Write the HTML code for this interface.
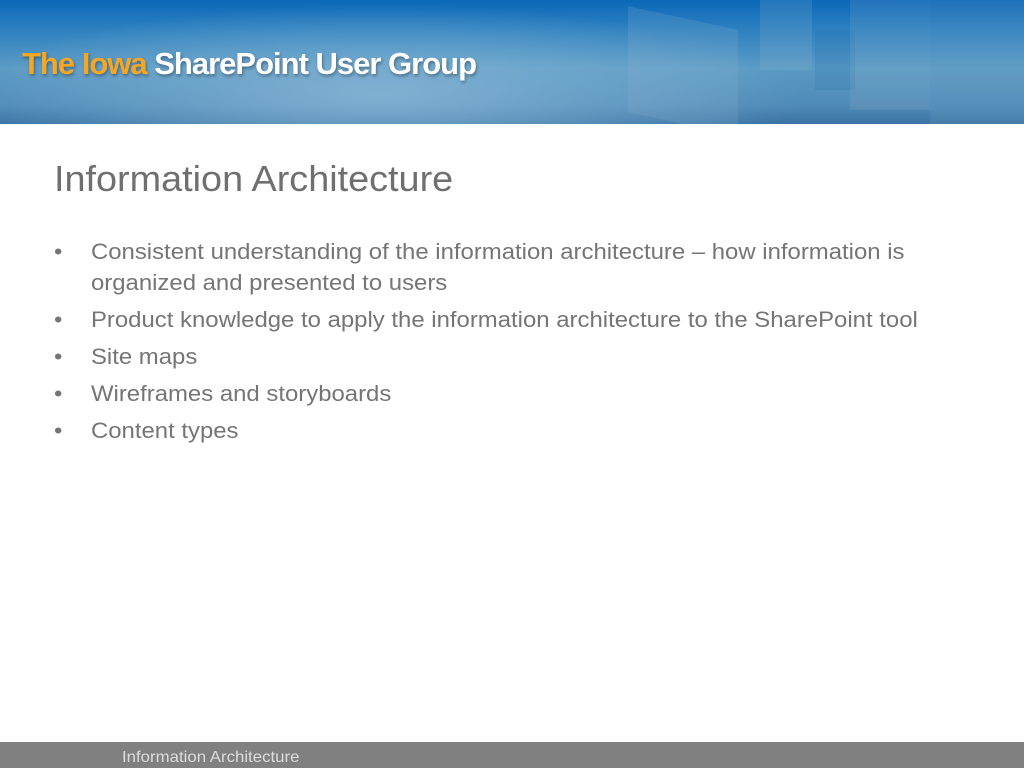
<!DOCTYPE html>
<html><head><style>
body{margin:0;width:1024px;height:768px;position:relative;background:#fff;overflow:hidden;font-family:"Liberation Sans",sans-serif}
#hdr{position:absolute;left:0;top:0;width:1024px;height:124px;
background:radial-gradient(ellipse 420px 90px at 380px 95px,rgba(140,185,215,.8),rgba(140,185,215,0)),
linear-gradient(180deg,#0b68b8 0%,#2f82c0 25%,#5a9ac4 55%,#4f8ab8 85%,#3b74a4 100%);overflow:hidden}
.b{position:absolute;background:rgba(150,185,210,.18)}
#logo{position:absolute;left:22px;top:46px;font-weight:bold;font-size:31px;letter-spacing:-1px;color:#fff;white-space:nowrap;transform:scaleX(1.0);transform-origin:left top;text-shadow:1px 2px 3px rgba(0,0,0,.35)}
#logo span{color:#f5a623}
h1{position:absolute;left:54px;top:158px;margin:0;font-weight:normal;font-size:36px;color:#6f6f6f;white-space:nowrap;transform:scaleX(1.05);transform-origin:left}
ul{position:absolute;left:54px;top:236px;margin:0;padding:0;list-style:none;color:#757575;font-size:22px;transform:scaleX(1.087);transform-origin:left}
li{position:relative;padding-left:34px;line-height:31px;margin-bottom:6px;white-space:nowrap}
li:before{content:"•";position:absolute;left:0;top:0}
#ft{position:absolute;left:0;top:742px;width:1024px;height:26px;background:#808080}
#ft div{position:absolute;left:122px;top:7px;font-size:16px;color:#dcdcdc;transform:scaleX(1.05);transform-origin:left}
</style></head><body>
<div id="hdr">
<div class="b" style="left:628px;top:18px;width:110px;height:106px;transform:skewY(12deg)"></div>
<div class="b" style="left:760px;top:0;width:52px;height:70px"></div>
<div class="b" style="left:815px;top:30px;width:40px;height:60px;background:rgba(30,100,170,.15)"></div>
<div class="b" style="left:930px;top:0;width:94px;height:124px;background:rgba(140,175,200,.15)"></div>
<div class="b" style="left:850px;top:0;width:80px;height:110px;background:rgba(160,190,210,.15)"></div>
<div id="logo"><span>The Iowa</span> SharePoint User Group</div>
</div>
<h1>Information Architecture</h1>
<ul>
<li>Consistent understanding of the information architecture – how information is<br>organized and presented to users</li>
<li>Product knowledge to apply the information architecture to the SharePoint tool</li>
<li>Site maps</li>
<li>Wireframes and storyboards</li>
<li>Content types</li>
</ul>
<div id="ft"><div>Information Architecture</div></div>
</body></html>
